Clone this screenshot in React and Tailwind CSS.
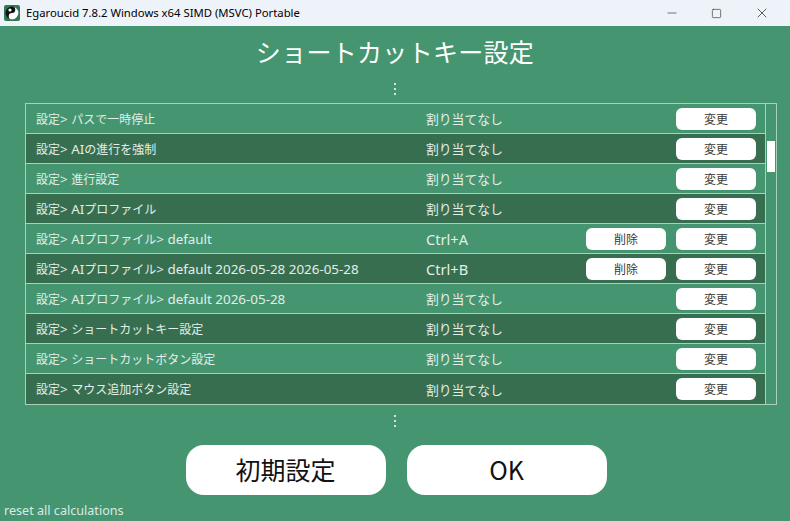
import { Minus, Square, X } from 'lucide-react';

const rows = [
  { label: '設定> パスで一時停止', key: '割り当てなし' },
  { label: '設定> AIの進行を強制', key: '割り当てなし' },
  { label: '設定> 進行設定', key: '割り当てなし' },
  { label: '設定> AIプロファイル', key: '割り当てなし' },
  { label: '設定> AIプロファイル> default', key: 'Ctrl+A', removable: true },
  { label: '設定> AIプロファイル> default 2026-05-28 2026-05-28', key: 'Ctrl+B', removable: true },
  { label: '設定> AIプロファイル> default 2026-05-28', key: '割り当てなし' },
  { label: '設定> ショートカットキー設定', key: '割り当てなし' },
  { label: '設定> ショートカットボタン設定', key: '割り当てなし' },
  { label: '設定> マウス追加ボタン設定', key: '割り当てなし' },
];

const jp = { fontFamily: '"Noto Sans CJK JP", "Noto Sans", sans-serif' };
const latinFont = { fontFamily: '"Noto Sans", sans-serif' };

// latin runs render a little larger than the kana/kanji around them
function Mixed({ text, latinClass }) {
  return text.split(/([\x00-\x7f]+)/).map((part, i) =>
    /^[\x00-\x7f]+$/.test(part) ? (
      <span key={i} className={latinClass} style={latinFont}>
        {part}
      </span>
    ) : (
      <span key={i}>{part}</span>
    )
  );
}

function Dots() {
  return (
    <div className="flex flex-col items-center gap-[3px]">
      <div className="w-[2px] h-[2px] bg-[#cfe6da]" />
      <div className="w-[2px] h-[2px] bg-[#cfe6da]" />
      <div className="w-[2px] h-[2px] bg-[#cfe6da]" />
    </div>
  );
}

function AppIcon() {
  return (
    <svg width="16" height="16" viewBox="0 0 16 16">
      <rect x="0" y="0" width="16" height="16" rx="2" fill="#2f7a55" />
      <circle cx="8" cy="8" r="6.5" fill="#111" />
      <path d="M8 1.5 A6.5 6.5 0 0 1 8 14.5 A3.25 3.25 0 0 1 8 8 A3.25 3.25 0 0 0 8 1.5 Z" fill="#fff" />
      <circle cx="6" cy="5" r="1.6" fill="#fff" />
    </svg>
  );
}

function SmallButton({ children }) {
  return (
    <button className="w-[80px] h-[22px] rounded-[6px] bg-white text-[12px] text-[#3a3a3a] flex items-center justify-center">
      {children}
    </button>
  );
}

export default function App() {
  return (
    <div className="w-[790px] h-[521px] flex flex-col overflow-hidden" style={jp}>
      {/* Window title bar */}
      <div className="h-[26px] bg-[#eef3f9] flex items-center shrink-0">
        <div className="pl-[4px] pr-[6px] flex items-center">
          <AppIcon />
        </div>
        <span className="text-[11.3px] text-black" style={latinFont}>
          Egaroucid 7.8.2 Windows x64 SIMD (MSVC) Portable
        </span>
        <div className="ml-auto flex items-center h-full pr-[6px]">
          <div className="w-[45px] h-full flex items-center justify-center">
            <Minus size={14} strokeWidth={1} color="#111" />
          </div>
          <div className="w-[45px] h-full flex items-center justify-center">
            <Square size={11} strokeWidth={1.2} color="#111" />
          </div>
          <div className="w-[45px] h-full flex items-center justify-center">
            <X size={16} strokeWidth={1} color="#111" />
          </div>
        </div>
      </div>

      {/* Main panel */}
      <div className="flex-1 bg-[#459670] flex flex-col items-center relative">
        <div className="h-[52px] flex items-center justify-center">
          <h1 className="text-[25px] text-white tracking-[0.3px]">ショートカットキー設定</h1>
        </div>
        <div className="h-[25px] flex items-start pt-[5px]">
          <Dots />
        </div>

        {/* Shortcut list */}
        <div className="self-start ml-[25px] w-[752px] h-[302px] flex border border-[#a6d2bc]">
          <div className="flex-1 flex flex-col">
            {rows.map((r, i) => (
              <div
                key={i}
                className={`h-[30px] flex items-center shrink-0 ${i < rows.length - 1 ? 'border-b border-[#a6d2bc]' : ''} ${i % 2 === 1 ? 'bg-[#386e50]' : 'bg-[#459670]'}`}
              >
                <span className="w-[400px] pl-[10px] pt-[2px] text-[12px] leading-none text-[#e3eee8] whitespace-nowrap">
                  <Mixed text={r.label} latinClass="text-[13.4px]" />
                </span>
                <span className="w-[160px] pt-[2px] text-[12.8px] leading-none text-[#e3eee8] whitespace-nowrap">
                  <Mixed text={r.key} latinClass="text-[14.6px]" />
                </span>
                <div className="w-[80px] flex">{r.removable && <SmallButton>削除</SmallButton>}</div>
                <div className="ml-[10px]">
                  <SmallButton>変更</SmallButton>
                </div>
              </div>
            ))}
          </div>
          {/* Scroll bar */}
          <div className="w-[11px] border-l border-[#a6d2bc] pt-[37px] pl-[1px]">
            <div className="w-[8px] h-[31px] bg-white" />
          </div>
        </div>

        <div className="h-[40px] flex items-start pt-[10px]">
          <Dots />
        </div>

        <div className="flex gap-[21px] pl-[2px]">
          <button className="w-[200px] h-[50px] rounded-[18px] bg-white text-[25px] text-[#111]">初期設定</button>
          <button className="w-[200px] h-[50px] rounded-[18px] bg-white text-[25px] text-[#111]">OK</button>
        </div>

        <span className="absolute left-[4px] bottom-[0px] text-[12.6px] text-[#dbeae2]" style={latinFont}>
          reset all calculations
        </span>
      </div>
    </div>
  );
}
